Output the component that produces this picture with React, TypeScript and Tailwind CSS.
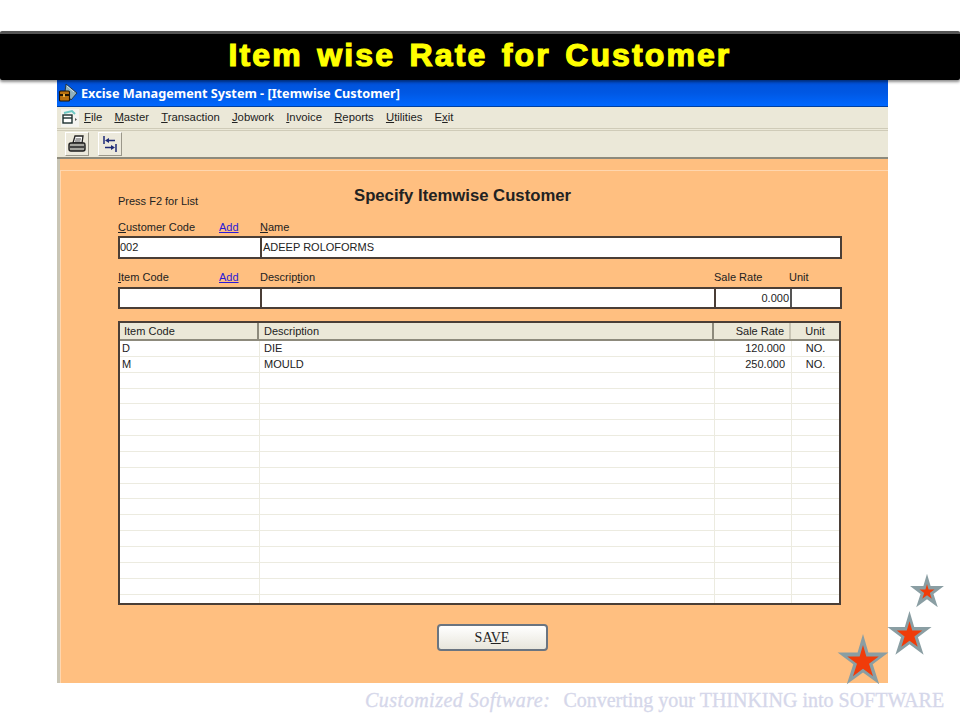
import React from "react";

const ui = "font-['Liberation_Sans',sans-serif]";

function Key({ k, rest, pre = "" }: { k: string; rest: string; pre?: string }) {
  return (
    <span>
      {pre}
      <span className="underline">{k}</span>
      {rest}
    </span>
  );
}

function Star({ size, inner }: { size: number; inner: number }) {
  const pts = "50,2 60,36 97,36 68,58 80,95 50,73 20,95 32,58 3,36 40,36";
  const s = inner / 100;
  const off = 50 * (1 - s);
  return (
    <svg width={size} height={size} viewBox="0 0 100 100">
      <polygon points={pts} fill="#8a9ea3" />
      <g transform={`translate(${off} ${off + 2}) scale(${s})`}>
        <polygon points={pts} fill="#f03c0a" />
      </g>
    </svg>
  );
}

const rows = [
  ["D", "DIE", "120.000", "NO."],
  ["M", "MOULD", "250.000", "NO."],
  ...Array.from({ length: 15 }, () => ["", "", "", ""]),
];

export default function App() {
  return (
    <div className="relative w-[960px] h-[720px] overflow-hidden bg-white pt-[31px] flex flex-col">
      <div className="relative z-10 h-[49px] shrink-0 bg-black border-t-[3px] border-[#555] rounded-[2px] shadow-[0_2px_3px_rgba(0,0,0,0.45)] flex justify-center">
        <h1 className="text-[32px] leading-[42px] font-bold text-[#ffff00] font-['Liberation_Sans',sans-serif] [-webkit-text-stroke:1.2px_#ffff00] tracking-[2.1px] [word-spacing:3.5px]">
          Item wise Rate for Customer
        </h1>
      </div>

      <div className={`ml-[57px] w-[831px] h-[603px] shrink-0 flex flex-col ${ui}`}>
        {/* title bar */}
        <div className="h-[27px] shrink-0 bg-gradient-to-b from-[#0050d8] via-[#0058e4] to-[#0068ff] border-b border-[#0040a0] flex items-center pl-[1px] gap-[3px]">
          <svg width="20" height="20" viewBox="0 0 20 20">
            <path d="M8 1 L19 10 L13 17 L7 9 Z" fill="#8fb0bd" stroke="#22303a" strokeWidth="0.9" />
            <path d="M9 3 L16 9" stroke="#d8e6ea" strokeWidth="1" />
            <rect x="1.5" y="8" width="10" height="10" rx="1" fill="#b9700f" stroke="#1f1405" strokeWidth="1.1" />
            <rect x="2" y="11" width="9" height="2" fill="#1f1405" />
            <rect x="5" y="11" width="2" height="3" fill="#e8b040" />
          </svg>
          <span className="font-['Noto_Sans',sans-serif] text-white text-[12.7px] font-bold leading-none">
            Excise Management System - [Itemwise Customer]
          </span>
        </div>

        {/* menu */}
        <div className="h-[21px] shrink-0 bg-[#ebe8d8] flex items-center text-[11.3px] text-[#222] leading-none">
          <svg width="18" height="18" viewBox="0 0 18 18" className="ml-[4px] mr-[5px]">
            <rect width="18" height="18" fill="#f4f4f0" />
            <path d="M3 4 L11 2 L14 5" stroke="#6cc8c4" strokeWidth="2" fill="none" />
            <rect x="2" y="6" width="9" height="8" fill="#fff" stroke="#1c3030" strokeWidth="1.4" />
            <path d="M2 9 H11" stroke="#1c3030" strokeWidth="1.4" />
            <path d="M14 9 l2 1.5 l-2 1.5 Z" fill="#555" />
          </svg>
          <div className="flex gap-[12.2px]">
            <Key k="F" rest="ile" />
            <Key k="M" rest="aster" />
            <Key k="T" rest="ransaction" />
            <Key k="J" rest="obwork" />
            <Key k="I" rest="nvoice" />
            <Key k="R" rest="eports" />
            <Key k="U" rest="tilities" />
            <Key pre="E" k="x" rest="it" />
          </div>
        </div>
        <div className="h-[3px] shrink-0 bg-[#ebe8d8] border-y border-[#cfcbb8]" />

        {/* toolbar */}
        <div className="h-[28px] shrink-0 bg-[#ebe8d8] border-b-2 border-[#8d8a7c] flex items-center gap-[9px] pl-[8px]">
          <button className="w-[24px] h-[24px] bg-[#ece9dc] border border-white border-r-[#9a978a] border-b-[#9a978a] flex items-center justify-center">
            <svg width="20" height="20" viewBox="0 0 20 20">
              <path d="M6 9 L8 2 H16 L15 9 Z" fill="#fff" stroke="#222" strokeWidth="1.3" />
              <path d="M8.5 5 H14 M8 7 H13.5" stroke="#333" strokeWidth="0.9" />
              <path d="M4 9 H17 Q18 9 18 11 V15 Q18 17 16 17 H4 Q2 17 2 15 V11 Q2 9 4 9 Z" fill="#a4a49e" stroke="#1c1c1c" strokeWidth="1.4" />
              <path d="M3 13 H17" stroke="#1c1c1c" strokeWidth="1.4" />
            </svg>
          </button>
          <button className="w-[24px] h-[24px] bg-[#ece9dc] border border-white border-r-[#9a978a] border-b-[#9a978a] flex items-center justify-center">
            <svg width="18" height="18" viewBox="0 0 18 18">
              <path d="M3 1 V9 M15 9 V17" stroke="#1d2a78" strokeWidth="1.5" />
              <path d="M8 5.5 H14 M4 12.5 H10" stroke="#1d2a78" strokeWidth="1.4" fill="none" />
              <path d="M4 5.5 L8 3 V8 Z M14 12.5 L10 10 V15 Z" fill="#1d2a78" />
            </svg>
          </button>
        </div>

        {/* form */}
        <div className="flex-1 flex flex-col bg-[#ffbf80] border-l-[3px] border-[#c9c5b5] pt-[11px] text-[11px] text-[#222]">
          <div className="flex-1 border-l border-t border-[#ffd6ae] pl-[57px] pr-[43px]">
            <div className="flex items-start h-[37px] mt-[11px]">
              <span className="w-[236px] mt-[12px] leading-[14px]">Press F2 for List</span>
              <span className="font-bold text-[16.7px] leading-[20px] mt-[4px]">Specify Itemwise Customer</span>
            </div>

            <div className="flex h-[16px] leading-[16px]">
              <span className="w-[101px]">
                <Key k="C" rest="ustomer Code" />
              </span>
              <span className="w-[41px] text-[#2a1ad8] underline">Add</span>
              <Key k="N" rest="ame" />
            </div>
            <div className="mt-[1px] h-[23px] w-[724px] bg-white border-2 border-[#4a3e36] flex items-center leading-none">
              <span className="w-[142px] h-full border-r-2 border-[#4a3e36] flex items-center">002</span>
              <span className="pl-[1px]">ADEEP ROLOFORMS</span>
            </div>

            <div className="flex h-[16px] leading-[16px] mt-[10px]">
              <span className="w-[101px]">
                <Key k="I" rest="tem Code" />
              </span>
              <span className="w-[41px] text-[#2a1ad8] underline">Add</span>
              <span className="w-[454px]">
                <Key pre="Descrip" k="t" rest="ion" />
              </span>
              <span className="w-[75px]">Sale Rate</span>
              <span>Unit</span>
            </div>
            <div className="mt-[2px] h-[22px] w-[724px] bg-white border-2 border-[#4a3e36] grid grid-cols-[142px_454px_76px_1fr] leading-none">
              <span className="border-r-2 border-[#4a3e36]" />
              <span className="border-r-2 border-[#4a3e36]" />
              <span className="border-r-2 border-[#555] flex items-center justify-end pr-[1px]">0.000</span>
              <span />
            </div>

            {/* grid */}
            <div className="mt-[12px] w-[723px] h-[284px] bg-white border-2 border-[#4a3e36] overflow-hidden leading-none">
              <div className="h-[18px] grid grid-cols-[139px_455px_77px_1fr] bg-[#ebe8d8] border-b-2 border-[#8d8a7c]">
                <span className="border-r-2 border-[#8d8a7c] pl-[4px] flex items-center">Item Code</span>
                <span className="border-r-2 border-[#8d8a7c] pl-[5px] flex items-center">Description</span>
                <span className="border-r-2 border-[#c9c5b5] pr-[5px] flex items-center justify-end">Sale Rate</span>
                <span className="flex items-center justify-center">Unit</span>
              </div>
              {rows.map((r, i) => (
                <div key={i} className="h-[15.85px] grid grid-cols-[140px_455px_77px_1fr] border-b border-[#ecebe0]">
                  <span className="border-r border-[#ecebe0] pl-[2px] flex items-center">{r[0]}</span>
                  <span className="border-r border-[#ecebe0] pl-[4px] flex items-center">{r[1]}</span>
                  <span className="border-r border-[#ecebe0] pr-[6px] flex items-center justify-end">{r[2]}</span>
                  <span className="flex items-center justify-center">{r[3]}</span>
                </div>
              ))}
            </div>

            <div className="mt-[19px] flex justify-center w-[723px] pl-[25px]">
              <button className="w-[111px] h-[27px] rounded-[4px] border-2 border-[#6a7480] bg-gradient-to-b from-white to-[#e8e6dc] font-['Liberation_Serif',serif] text-[14px] text-[#222] leading-none">
                SA<span className="underline">V</span>E
              </button>
            </div>
          </div>
        </div>
      </div>

      <div className="flex-1 pl-[365px] pt-[6px] whitespace-pre font-['Liberation_Serif',serif] text-[20px] leading-[22px] text-[#d5d7ea] [-webkit-text-stroke:0.3px_#d5d7ea]">
        <span className="italic tracking-[0.5px]">Customized Software:</span>
        <span className="ml-[13px]">Converting your THINKING into SOFTWARE</span>
      </div>

      <div className="absolute left-[909px] top-[573px]">
        <Star size={36} inner={44} />
      </div>
      <div className="absolute left-[886px] top-[610px]">
        <Star size={47} inner={58} />
      </div>
      <div className="absolute left-[836px] top-[633px]">
        <Star size={54} inner={62} />
      </div>
    </div>
  );
}
